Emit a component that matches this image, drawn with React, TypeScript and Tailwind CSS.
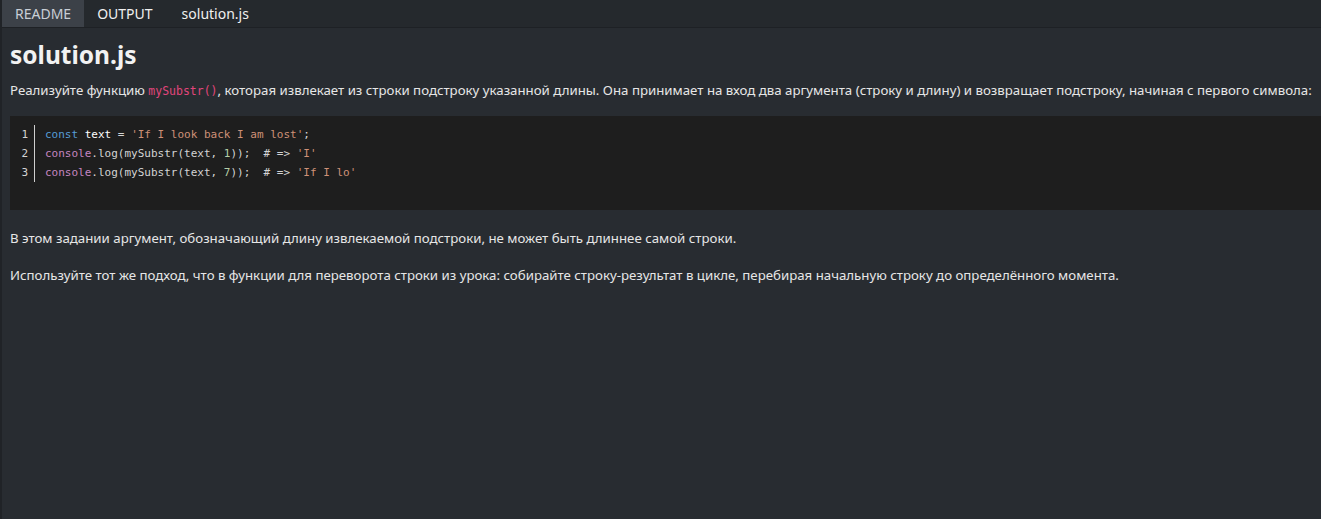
export default function App() {
  const sans = "font-['Segoe_UI','Noto_Sans','Open_Sans',sans-serif]";
  const mono = "font-['DejaVu_Sans_Mono','Liberation_Mono',monospace]";
  return (
    <div className={`h-[519px] w-[1321px] bg-[#282c31] text-[#e6e6e6] border-l-2 border-[#202327] flex flex-col overflow-hidden ${sans}`}>
      <div className="h-[28px] flex items-stretch bg-[#25292d] border-b border-[#1e2125] text-[14px]">
        <div className="px-[13px] flex items-center bg-[#3c4148] text-[#c9ced6]">README</div>
        <div className="px-[13px] flex items-center text-[#f0f0f0]">OUTPUT</div>
        <div className="px-[16px] flex items-center text-[#f0f0f0]">solution.js</div>
      </div>
      <div className="pl-[8px] pt-[9px]">
        <h1 className="text-[24.5px] font-bold leading-[36px] text-[#f2f2f2]">solution.js</h1>
        <p className="text-[13.25px] leading-[20px] mt-[7px] whitespace-nowrap">
          Реализуйте функцию{" "}
          <code className={`${mono} text-[11.5px] text-[#e0457b]`}>mySubstr()</code>
          , которая извлекает из строки подстроку указанной длины. Она принимает на вход два аргумента (строку и длину) и возвращает подстроку, начиная с первого символа:
        </p>
        <div className={`mt-[15px] h-[94px] bg-[#1e1e1e] pt-[9px] ${mono} text-[11px] leading-[19px]`}>
          <div className="flex">
            <div className="w-[24px] text-right text-[#d4d4d4] pr-[6px]">
              <div>1</div>
              <div>2</div>
              <div>3</div>
            </div>
            <div className="border-l border-[#cfcfcf] pl-[10px] text-[#d4d4d4] whitespace-pre">
              <div>
                <span className="text-[#569cd6]">const</span> <span className="text-white">text</span> = <span className="text-[#ce9178]">'If I look back I am lost'</span>;
              </div>
              <div>
                <span className="text-[#c586c0]">console</span>.log(mySubstr(text, <span className="text-[#b5cea8]">1</span>));  # =&gt; <span className="text-[#ce9178]">'I'</span>
              </div>
              <div>
                <span className="text-[#c586c0]">console</span>.log(mySubstr(text, <span className="text-[#b5cea8]">7</span>));  # =&gt; <span className="text-[#ce9178]">'If I lo'</span>
              </div>
            </div>
          </div>
        </div>
        <p className="text-[13.25px] leading-[20px] mt-[18px]">
          В этом задании аргумент, обозначающий длину извлекаемой подстроки, не может быть длиннее самой строки.
        </p>
        <p className="text-[13.25px] leading-[20px] mt-[17px]">
          Используйте тот же подход, что в функции для переворота строки из урока: собирайте строку-результат в цикле, перебирая начальную строку до определённого момента.
        </p>
      </div>
    </div>
  );
}
